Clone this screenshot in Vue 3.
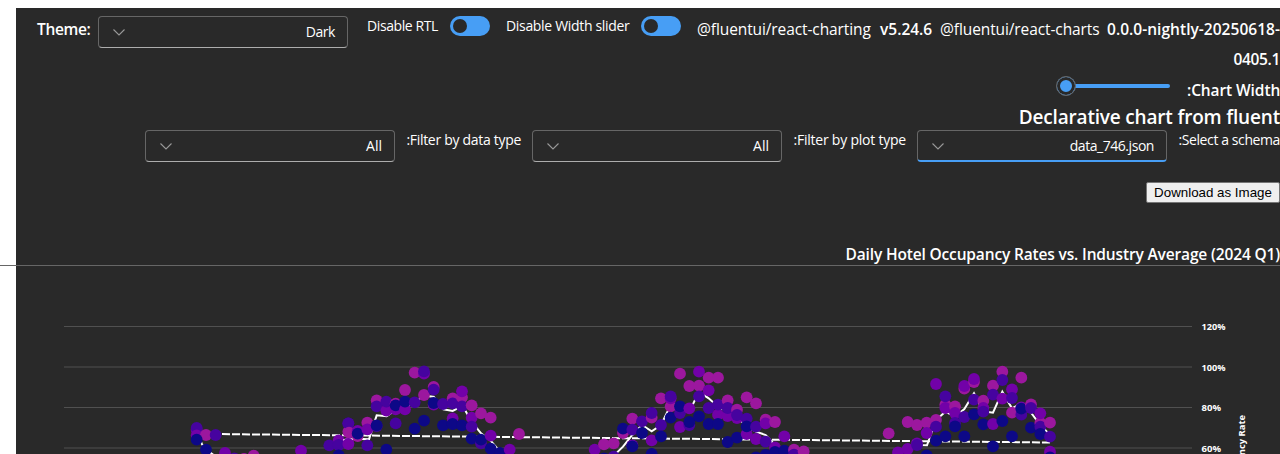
<script setup>
const colors = { m: '#9c179e', p: '#7201a8', i: '#46039f', n: '#0d0887' }

// Point clusters are stored on a grid three times finer than the plot.
const clusters = [
  {
    x: 180, y: 350,
    line: '50,240 66,283 78,299 105,318',
    dots: [
      ['p', 50, 239], ['i', 50, 234], ['p', 50, 256], ['m', 78, 255], ['i', 107, 255], ['n', 50, 269], ['n', 78, 299],
      ['p', 135, 309], ['i', 163, 325], ['m', 192, 327], ['m', 221, 317], ['p', 363, 302],
      ['p', 476, 271], ['m', 505, 245], ['i', 505, 220], ['i', 448, 286], ['p', 505, 280], ['i', 476, 285], ['n', 476, 316],
    ],
  },
  {
    x: 350, y: 350,
    line: '-20,270 23,266 57,268 80,196 110,199 137,180 165,175 194,155 222,137 251,140 280,178 308,183 336,168 345,180 365,215 393,250 422,272 450,305',
    dots: [
      ['i', -5, 220], ['m', -3, 248], ['p', -5, 282], ['p', 23, 243], ['m', 23, 258], ['n', 23, 251],
      ['m', 52, 218], ['p', 52, 238], ['i', 52, 286], ['m', 80, 151], ['i', 80, 169], ['i', 80, 228], ['n', 80, 226],
      ['p', 109, 182], ['i', 109, 155], ['n', 109, 299], ['m', 137, 161], ['p', 137, 178], ['n', 137, 166], ['i', 137, 220],
      ['m', 165, 120], ['p', 165, 178], ['n', 165, 155], ['m', 194, 68], ['i', 194, 157], ['n', 194, 236],
      ['p', 222, 71], ['i', 222, 64], ['m', 222, 135], ['n', 222, 212], ['m', 251, 111], ['i', 251, 119], ['p', 251, 164], ['n', 251, 159],
      ['i', 279, 162], ['n', 279, 226], ['m', 308, 145], ['i', 308, 160], ['p', 308, 205], ['n', 308, 222],
      ['m', 336, 142], ['p', 336, 124], ['i', 336, 169], ['n', 336, 226], ['m', 365, 166], ['p', 365, 203], ['i', 365, 230], ['n', 365, 266],
      ['m', 393, 190], ['i', 393, 280], ['n', 393, 269], ['m', 422, 203], ['p', 422, 257], ['n', 422, 296], ['n', 450, 309], ['p', 479, 299], ['m', 507, 252],
    ],
  },
  {
    x: 580, y: 350,
    line: '90,328 129,290 157,255 186,225 215,244 243,225 272,165 300,180 328,185 357,125 386,145 414,170 443,185 471,200 500,230 528,245 557,255 585,285',
    dots: [
      ['p', 44, 299], ['m', 72, 283], ['n', 72, 325], ['m', 101, 280], ['i', 101, 320], ['m', 129, 249], ['n', 129, 236],
      ['m', 157, 206], ['i', 157, 239], ['p', 157, 286], ['n', 157, 289], ['i', 186, 214], ['n', 186, 249],
      ['m', 215, 203], ['i', 215, 189], ['p', 215, 271], ['n', 215, 312], ['m', 243, 145], ['i', 243, 225], ['n', 243, 259],
      ['m', 272, 169], ['p', 272, 145], ['i', 272, 139], ['n', 272, 203], ['m', 300, 71], ['i', 300, 189], ['n', 300, 169], ['p', 300, 231],
      ['m', 328, 108], ['p', 328, 175], ['i', 328, 225], ['n', 328, 216], ['m', 357, 107], ['p', 357, 65], ['i', 357, 139], ['n', 357, 199],
      ['m', 386, 83], ['p', 386, 121], ['i', 386, 174], ['n', 386, 222], ['m', 414, 83], ['p', 414, 194], ['i', 414, 164], ['n', 414, 222],
      ['m', 443, 151], ['p', 443, 198], ['i', 443, 174], ['n', 443, 276], ['m', 471, 179], ['p', 471, 204], ['i', 471, 195], ['n', 471, 263],
      ['m', 500, 142], ['i', 500, 206], ['p', 500, 252], ['n', 500, 229], ['m', 528, 160], ['p', 528, 267], ['i', 528, 230], ['n', 528, 322],
      ['m', 557, 209], ['p', 557, 220], ['i', 557, 275], ['n', 557, 315], ['m', 585, 216], ['p', 585, 292], ['n', 585, 306],
      ['p', 613, 259], ['n', 613, 302], ['m', 642, 299], ['i', 642, 314], ['m', 671, 304],
    ],
  },
  {
    x: 870, y: 350,
    line: '130,275 150,285 171,286 198,210 226,185 255,200 283,177 312,130 340,184 369,188 397,125 426,175 454,160 483,188 511,225 540,255',
    dots: [
      ['m', 56, 250], ['p', 84, 307], ['m', 113, 216], ['p', 113, 297], ['m', 141, 225], ['p', 141, 280], ['i', 141, 285],
      ['m', 170, 218], ['p', 170, 249], ['n', 170, 316], ['m', 198, 210], ['p', 198, 102], ['i', 198, 230], ['n', 198, 272],
      ['m', 226, 164], ['i', 226, 139], ['p', 226, 174], ['n', 226, 259], ['m', 255, 169], ['p', 255, 189], ['i', 255, 219], ['n', 255, 229],
      ['m', 283, 116], ['p', 283, 108], ['i', 283, 201], ['n', 283, 259], ['m', 312, 96], ['p', 312, 87], ['i', 312, 149], ['n', 312, 193],
      ['m', 340, 152], ['p', 340, 174], ['i', 340, 185], ['n', 340, 223], ['m', 369, 107], ['p', 369, 222], ['i', 369, 134], ['n', 369, 289],
      ['m', 397, 65], ['i', 397, 90], ['p', 397, 146], ['n', 397, 213], ['m', 426, 188], ['p', 426, 118], ['i', 426, 144], ['n', 426, 259],
      ['m', 454, 83], ['p', 454, 172], ['i', 454, 194], ['n', 454, 176], ['m', 483, 163], ['i', 483, 174], ['n', 483, 233],
      ['m', 511, 219], ['p', 511, 190], ['i', 511, 230], ['n', 511, 252], ['m', 540, 218], ['i', 540, 260], ['p', 540, 305], ['n', 540, 322],
    ],
  },
]

const ticks = [
  { y: 326.5, label: '120%', w: 24 },
  { y: 367, label: '100%', w: 24 },
  { y: 407.5, label: '80%', w: 19.5 },
  { y: 448, label: '60%', w: 19.5 },
]
</script>

<template>
  <div class="page">
    <div class="surface">
      <div class="toolbar">
        <b class="theme">Theme:</b>
        <div class="select theme-select">
          <svg class="chev" viewBox="0 0 14 10"><path d="M1.500 2.500 7 8l5.500-5.500" /></svg><span class="dark">Dark</span>
        </div>
        <span class="label rtl">Disable RTL</span>
        <span class="switch"></span>
        <span class="label slide">Disable Width slider</span>
        <span class="switch"></span>
        <div class="packages">
          <div class="versions"><span class="charting">@fluentui/react-charting</span><b class="v5">v5.24.6</b><span class="charts">@fluentui/react-charts</span><b class="nightly">0.0.0-nightly-20250618-</b></div>
          <b class="build">0405.1</b>
        </div>
      </div>
      <div class="width-row">
        <div class="slider"><span class="thumb"></span></div>
        <b class="chart-width">:Chart Width</b>
      </div>
      <h2><span>Declarative chart from fluent</span></h2>
      <div class="filters">
        <div class="select"><svg class="chev" viewBox="0 0 14 10"><path d="M1.500 2.500 7 8l5.500-5.500" /></svg><span class="all">All</span></div>
        <span class="label data-type">:Filter by data type</span>
        <div class="select"><svg class="chev" viewBox="0 0 14 10"><path d="M1.500 2.500 7 8l5.500-5.500" /></svg><span class="all">All</span></div>
        <span class="label plot-type">:Filter by plot type</span>
        <div class="select active"><svg class="chev" viewBox="0 0 14 10"><path d="M1.500 2.500 7 8l5.500-5.500" /></svg><span class="json">data_746.json</span></div>
        <span class="label schema">:Select a schema</span>
      </div>
      <div class="actions"><button>Download as Image</button></div>
      <h3><span>Daily Hotel Occupancy Rates vs. Industry Average (2024 Q1)</span></h3>
    </div>
    <div class="rule"></div>
    <svg class="chart" width="1264" height="188" viewBox="16 266 1264 188">
      <g v-for="t in ticks" :key="t.label">
        <line class="grid" x1="64" x2="1192" :y1="t.y" :y2="t.y" />
        <text x="1201.500" :y="t.y + 3.500" :textLength="t.w" lengthAdjust="spacingAndGlyphs">{{ t.label }}</text>
      </g>
      <text transform="translate(1244.500 415) rotate(-90)" text-anchor="end" textLength="75" lengthAdjust="spacingAndGlyphs">Occupancy Rate</text>
      <path class="trend" d="M212 434 1050 442.500" />
      <g v-for="c in clusters" :key="c.x" :transform="`translate(${c.x} ${c.y}) scale(.33333)`">
        <polyline class="mean" :points="c.line" />
        <circle v-for="(d, k) in c.dots" :key="k" :cx="d[1]" :cy="d[2]" r="17.700" :fill="colors[d[0]]" />
      </g>
    </svg>
  </div>
</template>

<style>
body { margin: 0; background: #fff; overflow: hidden; }
</style>

<style scoped>
.page { height: 454px; box-sizing: border-box; padding-top: 8px; overflow: hidden; color: #fff; font-family: "Open Sans", "Noto Sans", sans-serif; background: linear-gradient(#292929, #292929) 16px 8px no-repeat; }
.surface { margin-left: 16px; height: 257px; }
.page * { box-sizing: border-box; white-space: nowrap; }
b, h2, h3 { font-weight: 600; }
.toolbar { display: flex; height: 66px; align-items: flex-start; padding-left: 21px; }
.theme { width: 54px; margin: 10px 7px 0 0; font-size: 15.5px; line-height: 22px; letter-spacing: -.35px; }
.select { width: 250px; height: 32px; flex: none; border: 1px solid #666; border-bottom-color: #adadad; border-radius: 4px; display: flex; align-items: center; justify-content: space-between; padding: 0 12px 0 13px; font-size: 14px; line-height: 20px; }
.select.active { border-bottom: 2px solid #479ef5; padding-top: 1px; }
.theme-select { margin: 8px 19px 0 0; }
.chev { width: 14px; height: 10px; fill: none; stroke: #999; stroke-width: 1.1; }
.label { font-size: 14px; line-height: 20px; flex: none; }
.toolbar .label { margin-top: 8px; }
.rtl { width: 83px; letter-spacing: -.4px; }
.slide { width: 135px; letter-spacing: -.32px; }
.switch { width: 40px; height: 20px; flex: none; border-radius: 10px; background: #479ef5; margin: 8px 16px 0 0; padding: 3px; }
.switch::before { content: ""; display: block; width: 14px; height: 14px; border-radius: 50%; background: #292929; }
.packages { flex: 1; font-size: 15.5px; line-height: 30px; padding-top: 6px; text-align: right; }
.versions { display: flex; text-align: left; }
.versions > * { flex: none; }
.charting { width: 183px; letter-spacing: -.1px; }
.v5 { width: 60px; }
.charts { width: 167px; letter-spacing: -.1px; }
.nightly { letter-spacing: .03px; }
.build { display: block; letter-spacing: -.35px; }
.width-row { height: 32px; display: flex; justify-content: flex-end; }
.slider { width: 104px; height: 4px; background: #479ef5; border-radius: 2px; margin: 10px 17px 0 0; }
.thumb { display: block; width: 20px; height: 20px; margin: -8px 0 0 -10px; border-radius: 50%; border: 1px solid #666; background: #479ef5; box-shadow: inset 0 0 0 3px #292929; }
.chart-width { width: 93px; text-align: right; font-size: 15.5px; line-height: 22px; margin-top: 5px; letter-spacing: -.1px; }
h2 { margin: -1px 0 1px; height: 24px; line-height: 24px; font-size: 19px; text-align: right; letter-spacing: -.18px; }
.filters { display: flex; justify-content: flex-end; height: 52px; }
.filters .label { text-align: right; }
.data-type { width: 126px; margin-right: 11px; letter-spacing: -.3px; }
.plot-type { width: 124px; margin-right: 11px; letter-spacing: -.22px; }
.schema { width: 113px; letter-spacing: -.4px; }
.dark, .json { letter-spacing: -.45px; }
.all { letter-spacing: 0; }
.actions { display: flex; justify-content: flex-end; height: 62px; }
button { width: 134px; height: 21px; border: 1px solid #767676; border-radius: 2px; background: #efefef; color: #000; padding: 0; font: 13.333px "Liberation Sans", Arial, sans-serif; }
h3 { margin: -1px 0 0; text-align: right; font-size: 15.5px; line-height: 22px; letter-spacing: -.15px; }
.rule { height: 1px; background: #666; }
.chart { display: block; margin-left: 16px; }
.chart text { fill: #fff; font-size: 9.5px; font-weight: 700; }
.grid { stroke: #505050; stroke-width: 1; }
.trend { stroke: #fff; stroke-width: 2; stroke-dasharray: 8 2; }
.mean { fill: none; stroke: #fff; stroke-width: 6; }
</style>
